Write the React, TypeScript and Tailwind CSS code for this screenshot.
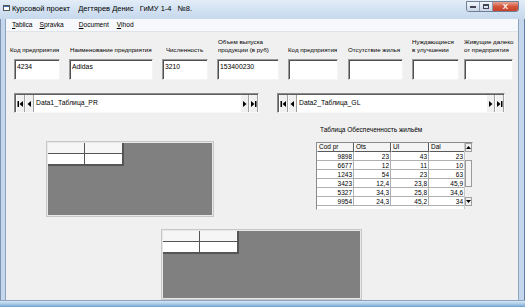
import React from "react";

const F = { fontFamily: '"Liberation Sans", Arial, sans-serif' };

function Edit({ w, text }: { w: number; text?: string }) {
  return (
    <div
      className="h-[21px] bg-white border border-t-[#9a9a9a] border-l-[#9a9a9a] border-b-[#f4f4f4] border-r-[#f4f4f4] shadow-[inset_1px_1px_0_#505050] text-[6.8px] leading-[8px] pl-[2px] pt-[3px] text-black"
      style={{ width: w }}
    >
      {text}
    </div>
  );
}

function Tri({ dir, bar }: { dir: "l" | "r"; bar?: boolean }) {
  return (
    <svg width="7" height="8" viewBox="0 0 7 8">
      {dir === "l" ? (
        <>
          {bar && <rect x="0.5" y="1" width="1.5" height="6" fill="#000" />}
          <polygon points={bar ? "6,1 2.5,4 6,7" : "5,1 1.5,4 5,7"} fill="#000" />
        </>
      ) : (
        <>
          <polygon points={bar ? "1,1 4.5,4 1,7" : "2,1 5.5,4 2,7"} fill="#000" />
          {bar && <rect x="5" y="1" width="1.5" height="6" fill="#000" />}
        </>
      )}
    </svg>
  );
}

function NavBtn({ children }: { children: React.ReactNode }) {
  return (
    <div className="w-[9px] h-full flex items-center justify-center bg-[#f0f0f0] border-r border-[#a0a0a0] border-l border-l-white">
      {children}
    </div>
  );
}

function Navigator({ w, text }: { w: number; text: string }) {
  return (
    <div
      className="h-[20px] flex bg-white border border-t-[#8a8a8a] border-l-[#8a8a8a] border-b-[#f8f8f8] border-r-[#f8f8f8] shadow-[inset_1px_1px_0_#606060]"
      style={{ width: w }}
    >
      <div className="flex h-full pt-[1px] pl-[1px]">
        <NavBtn>
          <Tri dir="l" bar />
        </NavBtn>
        <NavBtn>
          <Tri dir="l" />
        </NavBtn>
      </div>
      <div className="flex-1 text-[6.8px] leading-[18px] pl-[2px] text-black">{text}</div>
      <div className="flex h-full pt-[1px]">
        <NavBtn>
          <Tri dir="r" />
        </NavBtn>
        <NavBtn>
          <Tri dir="r" bar />
        </NavBtn>
      </div>
    </div>
  );
}

function EmptyGrid({ w, h }: { w: number; h: number }) {
  return (
    <div
      className="bg-[#808080] border border-[#e8e8e8] shadow-[0_0_0_1px_#c8c8c8]"
      style={{ width: w, height: h }}
    >
      <div className="flex flex-col w-[76px] border-r-2 border-b-2 border-[#555]">
        <div className="flex h-[11px]">
          <div className="w-[37px] bg-[#f6f6f6] border-r border-b border-[#555]" />
          <div className="flex-1 bg-[#f6f6f6] border-b border-[#555]" />
        </div>
        <div className="flex h-[10px]">
          <div className="w-[37px] bg-white border-r border-[#555]" />
          <div className="flex-1 bg-white" />
        </div>
      </div>
    </div>
  );
}

const rows = [
  ["9898", "23", "43", "23"],
  ["6677", "12", "11", "10"],
  ["1243", "54", "23", "63"],
  ["3423", "12,4", "23,8", "45,9"],
  ["5327", "34,3", "25,8", "34,6"],
  ["9954", "24,3", "45,2", "34"],
];
const cw = [37, 37, 38, 36];

function DataGrid() {
  return (
    <div className="flex w-[157px] h-[68px] bg-white border border-t-[#8a8a8a] border-l-[#8a8a8a] border-b-[#f0f0f0] border-r-[#f0f0f0] overflow-hidden">
      <div className="flex-1 flex flex-col overflow-hidden">
        <div className="flex h-[9px] shrink-0">
          {["Cod pr", "Ots", "Ul", "Dal"].map((t, i) => (
            <div
              key={t}
              className="bg-[#f4f4f4] border-r border-b border-[#5a5a5a] border-l border-l-white text-[6.5px] leading-[8px] pl-[1px] text-black shrink-0"
              style={{ width: cw[i] }}
            >
              {t}
            </div>
          ))}
        </div>
        {rows.map((r, ri) => (
          <div key={ri} className="flex h-[9px] shrink-0">
            {r.map((c, i) => (
              <div
                key={i}
                className="border-r border-b border-[#b0b0b0] text-[6.5px] leading-[9px] text-right pr-[1px] text-black shrink-0"
                style={{ width: cw[i] }}
              >
                {c}
              </div>
            ))}
          </div>
        ))}
      </div>
      <div className="w-[8px] flex flex-col bg-[#f0f0f0] border-l border-[#c8c8c8]">
        <div className="h-[9px] flex items-center justify-center bg-[#f0f0f0] border border-[#a0a0a0]">
          <svg width="5" height="3" viewBox="0 0 5 3">
            <polygon points="0,3 2.5,0 5,3" fill="#000" />
          </svg>
        </div>
        <div className="h-[8px]" />
        <div className="h-[27px] bg-[#f4f4f4] border border-[#9a9a9a]" />
        <div className="flex-1" />
        <div className="h-[9px] flex items-center justify-center bg-[#f0f0f0] border border-[#a0a0a0]">
          <svg width="5" height="3" viewBox="0 0 5 3">
            <polygon points="0,0 2.5,3 5,0" fill="#000" />
          </svg>
        </div>
        <div className="h-[3px]" />
      </div>
    </div>
  );
}

function Label({ ml, w, children }: { ml: number; w: number; children: React.ReactNode }) {
  return (
    <div
      className="text-[6.2px] leading-[8px] text-black shrink-0 whitespace-nowrap"
      style={{ marginLeft: ml, width: w }}
    >
      {children}
    </div>
  );
}

export default function App() {
  return (
    <div
      className="w-[525px] h-[307px] flex flex-col bg-[#bcd2ea] overflow-hidden"
      style={F}
    >
      {/* Title bar */}
      <div className="h-[19px] flex items-start bg-gradient-to-b from-[#e3edf8] via-[#d3e2f2] to-[#c6d8ec]">
        <div className="ml-[3px] mt-[5px] w-[7px] h-[6px] border border-[#555] bg-white flex flex-col">
          <div className="h-[1px] bg-[#3a6fb6]" />
        </div>
        <div className="ml-[2px] mt-[4px] text-[7.5px] leading-[10px] text-black whitespace-pre">
          {"Курсовой проект    Дегтярев Денис   ГиМУ 1-4   №8."}
        </div>
        <div className="flex-1" />
        <div className="mt-[1px] mr-[6px] flex h-[11px] rounded-b-[3px] border border-[#6e7f95] overflow-hidden">
          <div className="w-[13px] bg-gradient-to-b from-[#f2f6fb] to-[#c8d6e6] border-r border-[#8b9bb0] flex items-end justify-center pb-[3px]">
            <div className="w-[6px] h-[2px] bg-white border border-[#445]" />
          </div>
          <div className="w-[13px] bg-gradient-to-b from-[#f2f6fb] to-[#c8d6e6] border-r border-[#8b9bb0] flex items-center justify-center">
            <div className="w-[6px] h-[5px] bg-transparent border border-[#445] border-t-2" />
          </div>
          <div className="w-[25px] bg-gradient-to-b from-[#e8a593] via-[#d2553c] to-[#c8422a] flex items-center justify-center text-white text-[8px] font-bold leading-none">
            X
          </div>
        </div>
      </div>
      <div className="flex-1 flex">
        {/* left frame */}
        <div className="w-[6px] bg-[#c5d7ec] border-l border-[#7f94ad] border-r border-r-[#8ea3bc]" />
        <div className="flex-1 flex flex-col">
          {/* Menu */}
          <div className="h-[13px] bg-[#f7f8fb] border-b border-[#dfe4ea] flex items-center text-[6.6px] text-black">
            <span className="ml-[6px]"><span className="underline">T</span>ablica</span>
            <span className="ml-[7px]"><span className="underline">S</span>pravka</span>
            <span className="ml-[15px]"><span className="underline">D</span>ocument</span>
            <span className="ml-[8px]"><span className="underline">V</span>ihod</span>
          </div>
          {/* Client */}
          <div className="flex-1 bg-[#f0f0f0] flex flex-col">
            <div className="flex mt-[6px] h-[16px] items-end">
              <Label ml={4} w={56}>Код предприятия</Label>
              <Label ml={4} w={92}>Наименование предприятия</Label>
              <Label ml={4} w={48}>Численность</Label>
              <Label ml={4} w={66}>
                Объем выпуска
                <br />
                продукции (в руб)
              </Label>
              <Label ml={4} w={56}>Код предприятия</Label>
              <Label ml={4} w={60}>Отсутствие жилья</Label>
              <Label ml={4} w={48}>
                Нуждающиеся
                <br />в улучшении
              </Label>
              <Label ml={4} w={50}>
                Живущие далеко
                <br />
                от предприятия
              </Label>
            </div>
            <div className="flex mt-[5px]">
              <div className="ml-[8px]"><Edit w={46} text="4234" /></div>
              <div className="ml-[9px]"><Edit w={84} text="Adidas" /></div>
              <div className="ml-[9px]"><Edit w={46} text="3210" /></div>
              <div className="ml-[9px]"><Edit w={62} text="153400230" /></div>
              <div className="ml-[9px]"><Edit w={50} /></div>
              <div className="ml-[10px]"><Edit w={55} /></div>
              <div className="ml-[9px]"><Edit w={47} /></div>
              <div className="ml-[5px]"><Edit w={49} /></div>
            </div>
            <div className="flex mt-[13px]">
              <div className="ml-[8px]"><Navigator w={245} text="Data1_Таблица_PR" /></div>
              <div className="ml-[18px]"><Navigator w={228} text="Data2_Таблица_GL" /></div>
            </div>
            <div className="flex">
              <div className="ml-[41px] mt-[29px]">
                <EmptyGrid w={166} h={74} />
              </div>
              <div className="ml-[103px] flex flex-col">
                <div className="mt-[13px] ml-[4px] text-[6.5px] leading-[8px] text-black whitespace-nowrap">
                  Таблица Обеспеченность жильём
                </div>
                <div className="mt-[8px]">
                  <DataGrid />
                </div>
              </div>
            </div>
            <div className="flex mt-[14px]">
              <div className="ml-[156px]">
                <EmptyGrid w={199} h={69} />
              </div>
            </div>
          </div>
        </div>
        {/* right frame */}
        <div className="w-[7px] bg-[#c5d7ec] border-l border-[#8ea3bc] border-r border-r-[#5f7fa3]" />
      </div>
      {/* bottom frame */}
      <div className="h-[7px] bg-gradient-to-b from-[#d7e6f4] via-[#a9cbe8] to-[#6f9fcf] border-t border-[#8ea3bc]" />
    </div>
  );
}
